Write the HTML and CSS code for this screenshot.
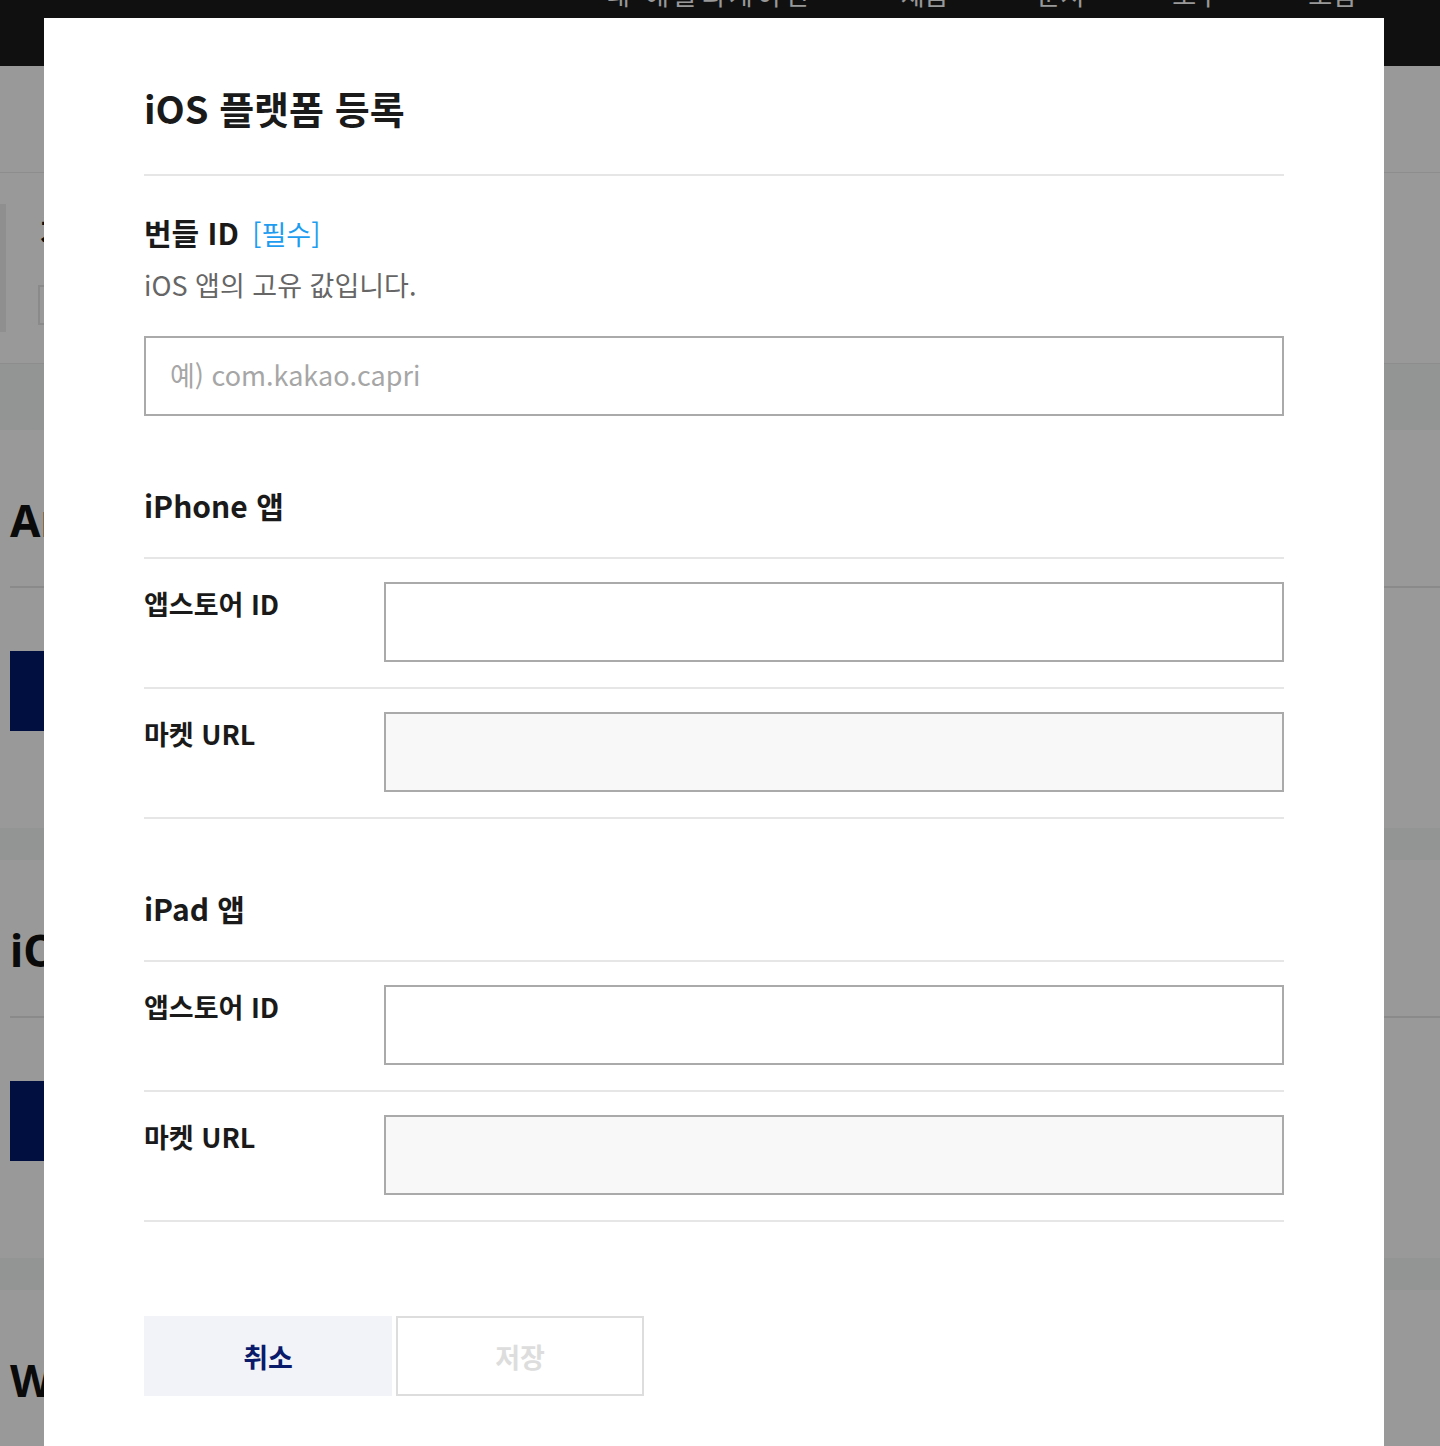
FILE: index.html
```html
<!DOCTYPE html>
<html lang="ko">
<head>
<meta charset="utf-8">
<title>iOS 플랫폼 등록</title>
<link rel="stylesheet" href="styles.css">
</head>
<body>
<div class="page">
  <header class="gnb">
    <nav class="gnb-nav">
      <span class="gnb-item gnb-item-wide">내 애플리케이션</span>
      <span class="gnb-item">제품</span>
      <span class="gnb-item">문서</span>
      <span class="gnb-item">도구</span>
      <span class="gnb-item">포럼</span>
    </nav>
  </header>
  <div class="subhead"></div>
  <div class="info">
    <div class="info-bar"></div>
    <div class="info-body">
      <div class="info-title">지정</div>
      <div class="info-box"></div>
    </div>
  </div>
  <div class="band band-first"></div>
  <section class="platform">
    <h2 class="platform-title">Android</h2>
    <div class="platform-line"></div>
    <div class="platform-btn"></div>
  </section>
  <div class="band"></div>
  <section class="platform">
    <h2 class="platform-title">iOS</h2>
    <div class="platform-line"></div>
    <div class="platform-btn"></div>
  </section>
  <div class="band"></div>
  <section class="platform">
    <h2 class="platform-title">Web</h2>
    <div class="platform-line"></div>
    <div class="platform-btn"></div>
  </section>
</div>

<div class="dim"></div>

<div class="modal">
  <h1 class="modal-title">iOS 플랫폼 등록</h1>

  <div class="field">
    <div class="field-label">번들 ID <span class="req">[필수]</span></div>
    <p class="field-desc">iOS 앱의 고유 값입니다.</p>
    <input class="text-input" type="text" placeholder="예) com.kakao.capri">
  </div>

  <div class="group">
    <h2 class="group-title">iPhone 앱</h2>
    <div class="row">
      <div class="row-label">앱스토어 ID</div>
      <input class="text-input row-input" type="text">
    </div>
    <div class="row">
      <div class="row-label">마켓 URL</div>
      <input class="text-input row-input readonly" type="text" readonly>
    </div>
  </div>

  <div class="group">
    <h2 class="group-title">iPad 앱</h2>
    <div class="row">
      <div class="row-label">앱스토어 ID</div>
      <input class="text-input row-input" type="text">
    </div>
    <div class="row">
      <div class="row-label">마켓 URL</div>
      <input class="text-input row-input readonly" type="text" readonly>
    </div>
  </div>

  <div class="actions">
    <button class="btn btn-cancel" type="button">취소</button>
    <button class="btn btn-save" type="button" disabled>저장</button>
  </div>
</div>
</body>
</html>
```

FILE: styles.css
```css
* { box-sizing: border-box; }

html, body {
  margin: 0;
  padding: 0;
  height: 1446px;
  overflow: hidden;
}

body {
  font-family: "Noto Sans CJK KR", "Noto Sans", sans-serif;
  color: #1a1a1a;
  background: #ffffff;
  position: relative;
}

/* ---------- background page ---------- */
.page {
  width: 1440px;
}

.gnb {
  height: 66px;
  background: #1c1c1c;
  display: flex;
  justify-content: flex-end;
  overflow: hidden;
}

.gnb-nav {
  display: flex;
  gap: 88px;
  margin-top: -19px;
  margin-right: 84px;
  height: 25px;
}

.gnb-item {
  color: #ffffff;
  font-size: 26px;
  line-height: 25px;
  white-space: nowrap;
}

.gnb-item-wide {
  letter-spacing: 4px;
}

.subhead {
  height: 107px;
  border-bottom: 1px solid #ebebeb;
}

.info {
  height: 191px;
  display: flex;
  border-bottom: 1px solid #ebebeb;
}

.info-bar {
  width: 6px;
  height: 128px;
  margin-top: 31px;
  background: #eeeeee;
}

.info-body {
  padding-left: 34px;
  padding-top: 36px;
}

.info-title {
  font-size: 30px;
  font-weight: 700;
  line-height: 44px;
  color: #111;
}

.info-box {
  width: 200px;
  height: 40px;
  margin-top: 32px;
  margin-left: -2px;
  border: 2px solid #e6e6e6;
}

.band {
  height: 32px;
  background: #f5f8f7;
}

.band-first {
  height: 66px;
}

.platform {
  height: 398px;
  padding-left: 10px;
  padding-top: 62px;
}

.platform-title {
  margin: 0;
  font-family: "Noto Sans", "Liberation Sans", sans-serif;
  font-size: 44px;
  font-weight: 700;
  line-height: 56px;
  color: #111;
}

.platform-line {
  height: 2px;
  margin-top: 38px;
  background: #e6e6e6;
}

.platform-btn {
  width: 200px;
  height: 80px;
  margin-top: 63px;
  background: #001a6b;
}

/* ---------- dim ---------- */
.dim {
  position: absolute;
  inset: 0;
  background: rgba(0, 0, 0, 0.4);
}

/* ---------- modal ---------- */
.modal {
  position: absolute;
  top: 18px;
  left: 44px;
  width: 1340px;
  height: 1500px;
  background: #ffffff;
  padding: 62px 100px 0;
}

.modal-title {
  margin: 0;
  font-size: 38px;
  font-weight: 700;
  line-height: 56px;
  color: #1a1a1a;
  padding-bottom: 38px;
  border-bottom: 2px solid #e6e6e6;
}

.field {
  padding-top: 36px;
}

.field-label {
  height: 40px;
  font-size: 30px;
  font-weight: 700;
  line-height: 40px;
  color: #1a1a1a;
}

.req {
  font-size: 27px;
  font-weight: 400;
  line-height: 1;
  color: #1e9df0;
  margin-left: 5px;
}

.field-desc {
  height: 36px;
  margin: 15px 0 0;
  font-size: 27px;
  line-height: 36px;
  color: #666666;
}

.text-input {
  display: block;
  width: 100%;
  height: 80px;
  margin: 0;
  border: 2px solid #aaaaaa;
  border-radius: 0;
  background: #ffffff;
  padding: 0 24px;
  font-family: "Noto Sans CJK KR", "Noto Sans", sans-serif;
  font-size: 27px;
  color: #333;
  outline: none;
}

.field .text-input {
  margin-top: 33px;
  padding-bottom: 3px;
}

.text-input::placeholder {
  color: #a6a6a6;
}

.group {
  padding-top: 67px;
}

.group-title {
  margin: 0;
  font-size: 30px;
  font-weight: 700;
  line-height: 44px;
  color: #1a1a1a;
  padding-bottom: 30px;
}

.row {
  display: flex;
  border-top: 2px solid #e6e6e6;
  padding: 23px 0 25px;
}

.row:last-child {
  border-bottom: 2px solid #e6e6e6;
}

.row-label {
  width: 240px;
  flex: none;
  font-size: 27px;
  font-weight: 700;
  line-height: 44px;
  color: #1a1a1a;
}

.row-input {
  flex: 1;
  width: auto;
}

.readonly {
  background: #f7f8f7;
}

.actions {
  display: flex;
  gap: 4px;
  margin-top: 94px;
}

.btn {
  width: 248px;
  height: 80px;
  margin: 0;
  padding: 0;
  font-family: "Noto Sans CJK KR", "Noto Sans", sans-serif;
  font-size: 27px;
  font-weight: 700;
  border-radius: 0;
  cursor: pointer;
}

.btn-cancel {
  background: #f2f3f8;
  border: none;
  color: #0a1a6b;
}

.btn-save {
  background: #ffffff;
  border: 2px solid #dddddd;
  color: #dddddd;
}
```
